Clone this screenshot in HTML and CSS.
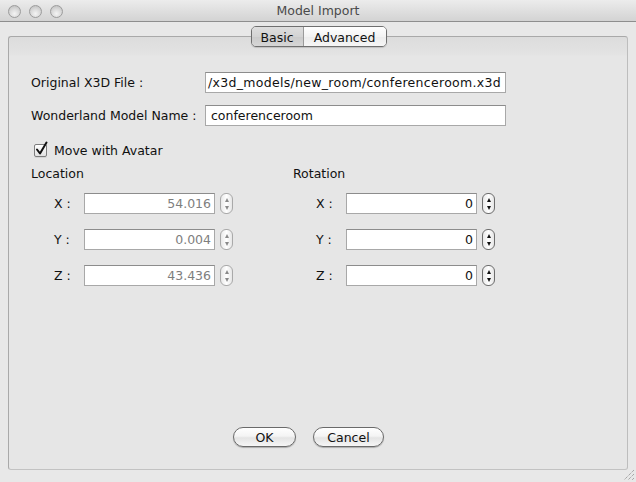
FILE: index.html
```html
<!DOCTYPE html>
<html>
<head>
<meta charset="utf-8">
<title>Model Import</title>
<link rel="stylesheet" href="styles.css">
</head>
<body>
<div class="window">
  <div class="titlebar">
    <div class="lights">
      <span class="light"></span><span class="light"></span><span class="light"></span>
    </div>
    <div class="title">Model Import</div>
  </div>
  <div class="body">
    <div class="tabs">
      <div class="tab tab-on">Basic</div>
      <div class="tab">Advanced</div>
    </div>
    <div class="panel">
      <div class="form-row">
        <div class="form-label">Original X3D File :</div>
        <div class="field field-path"><span>/x3d_models/new_room/conferenceroom.x3d</span></div>
      </div>
      <div class="form-row">
        <div class="form-label">Wonderland Model Name :</div>
        <div class="field"><span>conferenceroom</span></div>
      </div>
      <div class="check-row">
        <span class="checkbox">
          <svg width="15" height="16" viewBox="0 0 15 16"><path d="M3 8.5 L6 12.5 L12.5 1.5" fill="none" stroke="#111" stroke-width="2" stroke-linecap="round" stroke-linejoin="round"/></svg>
        </span>
        <span>Move with Avatar</span>
      </div>
      <div class="columns">
        <div class="col">
          <div class="col-title">Location</div>
          <div class="spin-row">
            <span class="axis">X :</span>
            <div class="num disabled">54.016</div>
            <div class="spinner disabled"><i class="up"></i><i class="down"></i></div>
          </div>
          <div class="spin-row">
            <span class="axis">Y :</span>
            <div class="num disabled">0.004</div>
            <div class="spinner disabled"><i class="up"></i><i class="down"></i></div>
          </div>
          <div class="spin-row">
            <span class="axis">Z :</span>
            <div class="num disabled">43.436</div>
            <div class="spinner disabled"><i class="up"></i><i class="down"></i></div>
          </div>
        </div>
        <div class="col">
          <div class="col-title">Rotation</div>
          <div class="spin-row">
            <span class="axis">X :</span>
            <div class="num">0</div>
            <div class="spinner"><i class="up"></i><i class="down"></i></div>
          </div>
          <div class="spin-row">
            <span class="axis">Y :</span>
            <div class="num">0</div>
            <div class="spinner"><i class="up"></i><i class="down"></i></div>
          </div>
          <div class="spin-row">
            <span class="axis">Z :</span>
            <div class="num">0</div>
            <div class="spinner"><i class="up"></i><i class="down"></i></div>
          </div>
        </div>
      </div>
      <div class="buttons">
        <button class="btn btn-ok">OK</button>
        <button class="btn btn-cancel">Cancel</button>
      </div>
    </div>
  </div>
  <div class="grip">
    <svg width="14" height="14" viewBox="0 0 14 14">
      <path d="M13 3 L3 13 M13 7 L7 13 M13 11 L11 13" stroke="#8a8a8a" stroke-width="1" stroke-dasharray="1 1" fill="none"/>
    </svg>
  </div>
</div>
</body>
</html>
```
FILE: styles.css
```css
* { box-sizing: border-box; }
html, body { margin: 0; padding: 0; }
body {
  width: 636px;
  height: 482px;
  overflow: hidden;
  background: #e8e8e8;
  font-family: "DejaVu Sans", "Liberation Sans", sans-serif;
  font-size: 12.5px;
  color: #111;
}
.window {
  position: relative;
  width: 636px;
  height: 482px;
  display: flex;
  flex-direction: column;
  background: #e8e8e8;
}
.titlebar {
  height: 22px;
  flex: none;
  display: flex;
  align-items: center;
  position: relative;
  background: linear-gradient(#ececec, #d3d3d3);
  border-bottom: 1px solid #8e8e8e;
}
.lights {
  display: flex;
  gap: 8px;
  padding-left: 8px;
  padding-top: 1px;
}
.light {
  width: 13px;
  height: 13px;
  border-radius: 50%;
  border: 1px solid #9c9c9c;
  background: radial-gradient(circle at 50% 70%, #f4f4f4 0, #dcdcdc 45%, #b9b9b9 100%);
}
.title {
  position: absolute;
  left: 0;
  right: 0;
  top: 3px;
  text-align: center;
  color: #4a4a4a;
  font-size: 12.5px;
}
.body {
  flex: 1;
  display: flex;
  flex-direction: column;
  padding: 4px 8px 12px 8px;
}
.tabs {
  align-self: center;
  margin-left: 1px;
  display: flex;
  height: 21px;
  margin-bottom: -11px;
  position: relative;
  z-index: 1;
  border: 1px solid #6f6f6f;
  border-radius: 5px;
  overflow: hidden;
  box-shadow: 0 1px 1px rgba(0,0,0,0.15);
}
.tab {
  display: flex;
  align-items: center;
  justify-content: center;
  padding-top: 1px;
  background: linear-gradient(#ffffff, #f3f3f3 50%, #ececec 51%, #f6f6f6);
  color: #111;
}
.tab-on {
  width: 52px;
  background: linear-gradient(#dedede, #d3d3d3 50%, #cacaca 51%, #d6d6d6);
  border-right: 1px solid #9a9a9a;
}
.tab:last-child { width: 82px; }
.panel {
  flex: 1;
  display: flex;
  flex-direction: column;
  border: 1px solid #a9a9a9;
  border-right-color: #bdbdbd;
  border-bottom-color: #c2c2c2;
  border-radius: 3px;
  background: linear-gradient(#dcdcdc, #e3e3e3 17px, #e6e6e6 19px, #e6e6e6);
  padding: 35px 0 22px 22px;
}
.form-row {
  display: flex;
  align-items: center;
  height: 21px;
  margin-bottom: 12px;
}
.form-label {
  width: 174px;
  flex: none;
}
.field {
  width: 301px;
  height: 21px;
  background: #fff;
  border: 1px solid #a8a8a8;
  border-top-color: #8c8c8c;
  display: flex;
  align-items: center;
  padding: 0 5px;
  white-space: nowrap;
  overflow: hidden;
  color: #111;
  font-size: 12.5px;
}
.field-path {
  justify-content: flex-end;
  padding: 0 4px 0 0;
  letter-spacing: 0.3px;
}
.check-row {
  display: flex;
  align-items: center;
  gap: 7px;
  margin: 5px 0 0 3px;
  height: 15px;
}
.checkbox {
  position: relative;
  width: 13px;
  height: 13px;
  border: 1px solid #7d7d7d;
  border-radius: 2px;
  background: linear-gradient(#ffffff, #e2e2e2);
  box-shadow: 0 1px 0 rgba(0,0,0,0.08);
}
.checkbox svg {
  position: absolute;
  left: -1px;
  top: -4px;
}
.columns {
  display: grid;
  grid-template-columns: 262px 262px;
  margin-top: 8px;
}
.col-title {
  height: 15px;
  line-height: 15px;
  margin-bottom: 12px;
}
.spin-row {
  display: flex;
  align-items: center;
  height: 21px;
  margin-bottom: 15px;
  padding-left: 23px;
}
.axis {
  width: 30px;
  flex: none;
}
.num {
  width: 131px;
  height: 21px;
  background: #fff;
  border: 1px solid #a8a8a8;
  border-top-color: #8c8c8c;
  display: flex;
  align-items: center;
  justify-content: flex-end;
  padding-right: 3px;
  font-size: 12.5px;
  color: #111;
}
.num.disabled { color: #7e7e7e; }
.spinner {
  width: 13px;
  height: 21px;
  margin-left: 5px;
  border: 1px solid #6d6d6d;
  border-radius: 6px;
  background: linear-gradient(90deg, #e9e9e9, #ffffff 50%, #e6e6e6);
  display: flex;
  flex-direction: column;
  align-items: center;
  justify-content: center;
  gap: 4px;
}
.spinner.disabled {
  border-color: #a9a9a9;
}
.spinner i {
  display: block;
  width: 0;
  height: 0;
  border-left: 2.5px solid transparent;
  border-right: 2.5px solid transparent;
}
.spinner .up { border-bottom: 4px solid #111; }
.spinner .down { border-top: 4px solid #111; }
.spinner.disabled .up { border-bottom-color: #8a8a8a; }
.spinner.disabled .down { border-top-color: #8a8a8a; }
.buttons {
  margin-top: auto;
  display: flex;
  gap: 17px;
  padding-left: 202px;
}
.btn {
  height: 20px;
  border: 1px solid #6a6a6a;
  border-radius: 10px;
  background: linear-gradient(#ffffff, #f4f4f4 45%, #e4e4e4 55%, #f6f6f6);
  font-family: "DejaVu Sans", "Liberation Sans", sans-serif;
  font-size: 12.5px;
  color: #111;
  padding: 0;
  box-shadow: 0 1px 1px rgba(0,0,0,0.25);
}
.btn-ok { width: 63px; }
.btn-cancel { width: 71px; }
.grip {
  position: absolute;
  right: 1px;
  bottom: 1px;
  width: 14px;
  height: 14px;
}
```
